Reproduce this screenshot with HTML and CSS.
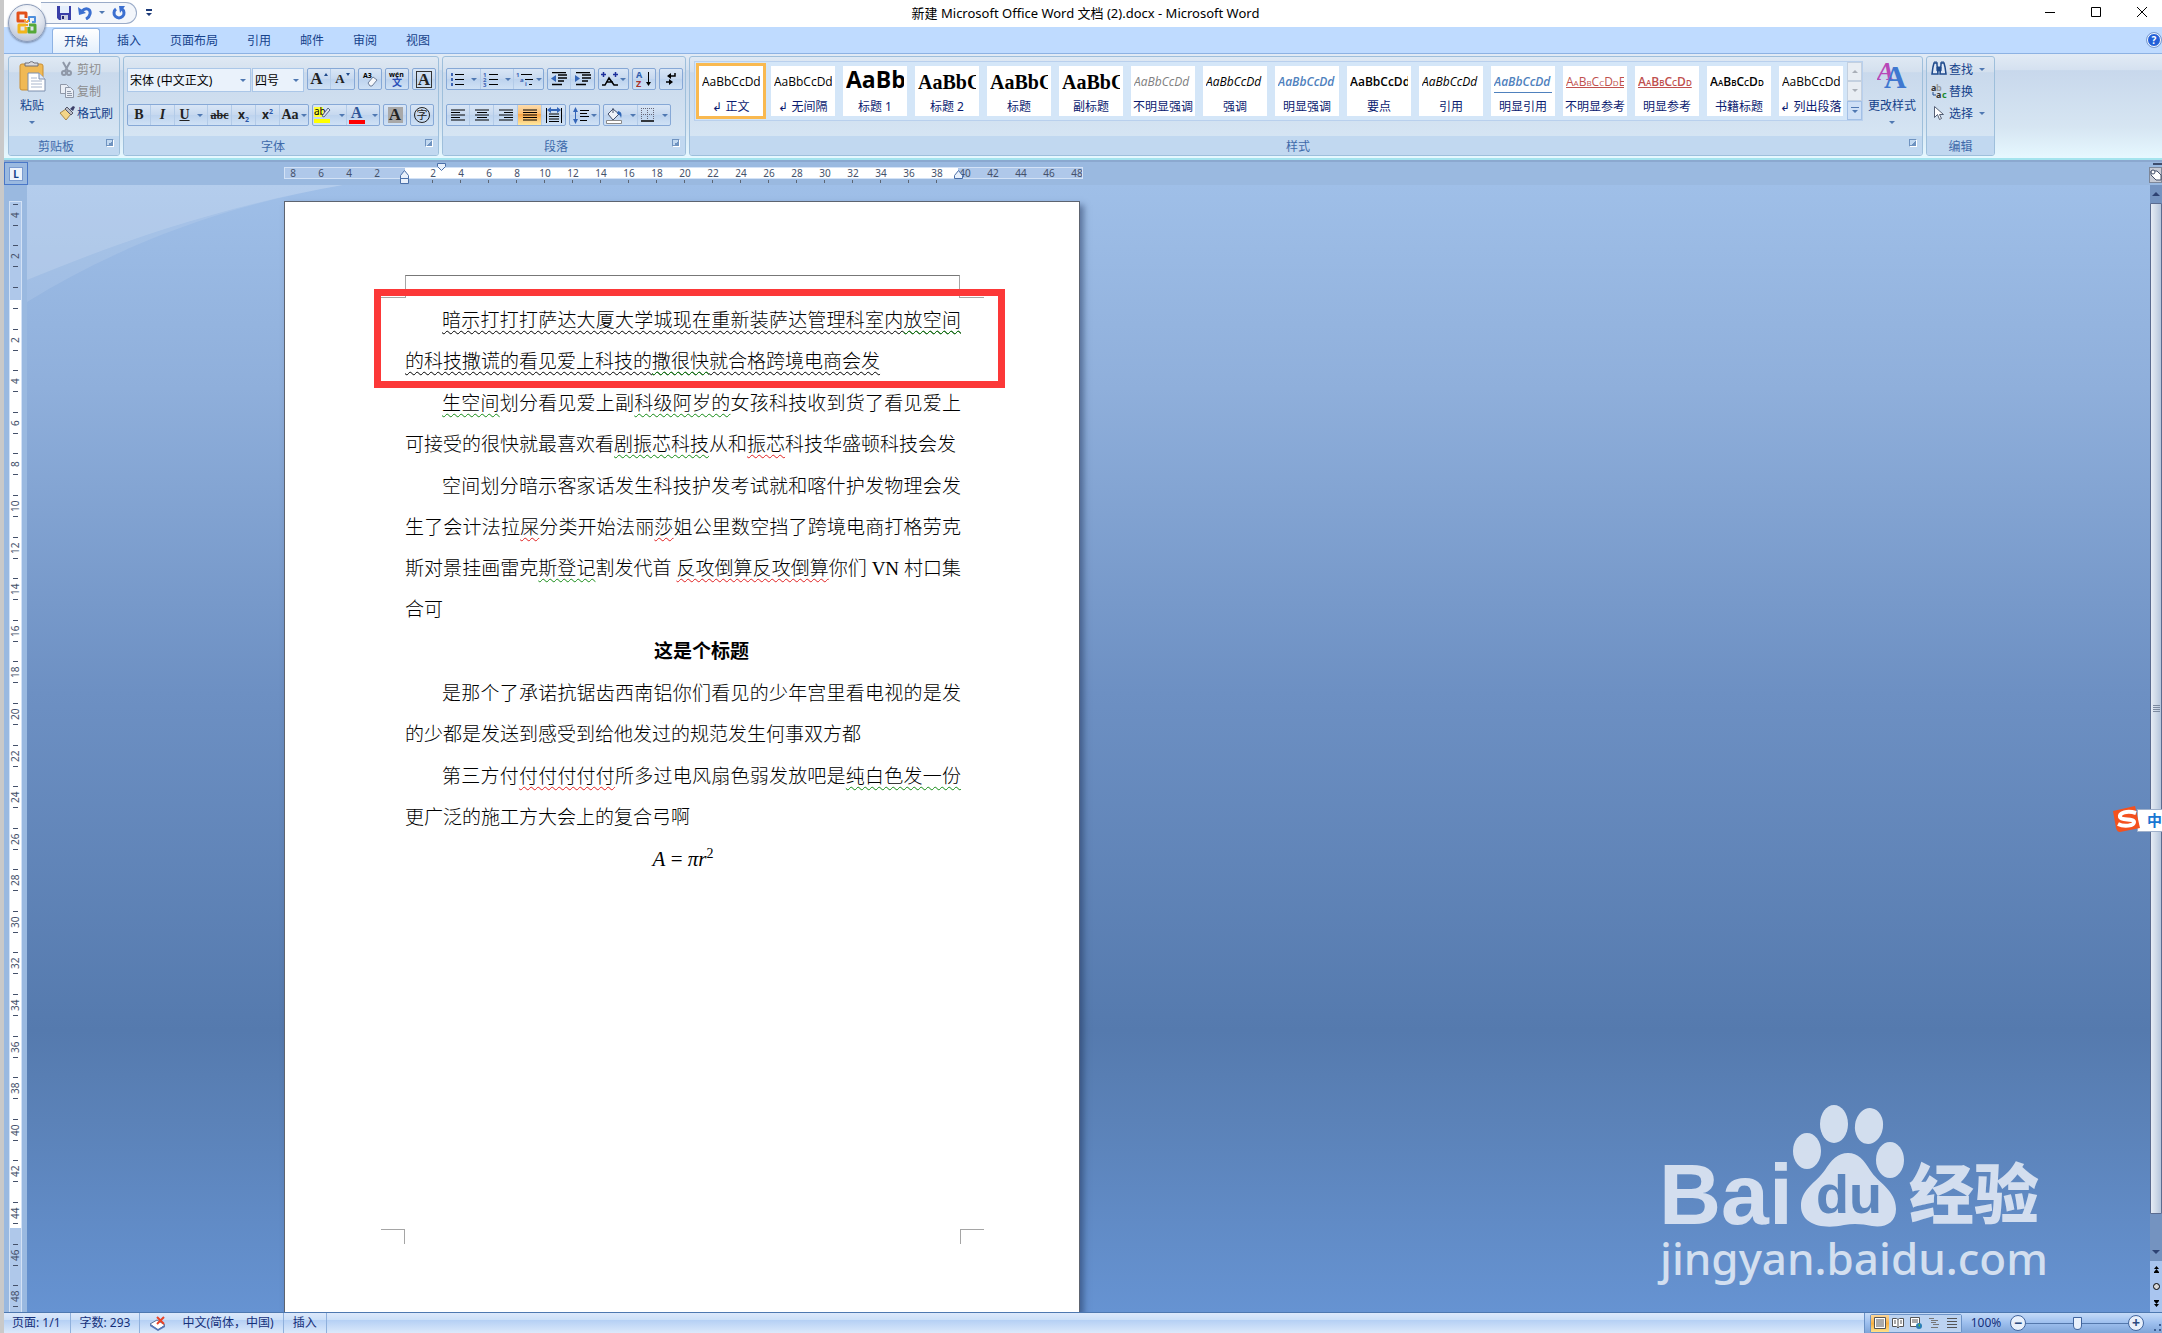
FILE: index.html
```html
<!DOCTYPE html>
<html lang="zh-CN">

<head>
  <meta charset="UTF-8">
  <meta name="viewport" content="width=device-width, initial-scale=1.0">
  <title>新建 Microsoft Office Word 文档 (2).docx - Microsoft Word</title>
  <link rel="stylesheet" href="styles.css">
</head>

<body>
  <div class="app">
    <!-- Title bar -->
    <header class="titlebar">
      <div class="quick-access">
        <button class="qa-btn" aria-label="保存">
          <svg width="14" height="14" viewBox="0 0 14 14"><path d="M0 0h14v14H2l-2-2z" fill="#3a3fa8"/><path d="M3 0h9v7H3z" fill="#e4eefc"/><path d="M4 9h7v5H4z" fill="#c8cce0"/><path d="M5 10h2v3H5z" fill="#23266e"/></svg>
        </button>
        <button class="qa-btn" aria-label="撤消">
          <svg width="14" height="14" viewBox="0 0 14 14"><path d="M4 5c4-4 9-2 8 3-.4 2-2 4-4 5" fill="none" stroke="#3b6fd0" stroke-width="3"/><path d="M0 1l1 8 7-2z" fill="#3b6fd0"/></svg>
        </button>
        <span class="arrow"></span>
        <button class="qa-btn" aria-label="恢复">
          <svg width="14" height="14" viewBox="0 0 14 14"><path d="M4 3a5 5 0 1 0 6 0" fill="none" stroke="#3b6fd0" stroke-width="3"/><path d="M7 0h6L8 7z" fill="#3b6fd0"/></svg>
        </button>
      </div>
      <button class="qa-more" aria-label="自定义快速访问工具栏">
        <svg width="6" height="8" viewBox="0 0 6 8"><path d="M0 0h6v2H0zM0 4h6L3 7z" fill="#1c3a78"/></svg>
      </button>
      <h1 class="title">新建 Microsoft Office Word 文档 (2).docx - Microsoft Word</h1>
      <div class="window-controls">
        <button aria-label="最小化"><svg width="11" height="11" viewBox="0 0 11 11"><path d="M0 5.500h10" stroke="#000"/></svg></button>
        <button aria-label="最大化"><svg width="11" height="11" viewBox="0 0 11 11"><path d="M.5.5h9v9h-9z" fill="none" stroke="#000"/></svg></button>
        <button aria-label="关闭"><svg width="11" height="11" viewBox="0 0 11 11"><path d="M0 0l10 10M10 0L0 10" stroke="#000"/></svg></button>
      </div>
    </header>

    <button class="office-button" aria-label="Office 按钮">
      <svg width="24" height="24" viewBox="0 0 24 24" fill="none" stroke-width="3" stroke-linejoin="round">
        <path d="M11 10H3V2h8v5" stroke="#e2501a"/>
        <path d="M14 11V6h6v5h-3" stroke="#4f8fdc" stroke-width="2"/>
        <path d="M11 14H4v7h7v-5" stroke="#f2b51c"/>
        <path d="M14 14h6v7h-6v-5" stroke="#55a838" stroke-width="3"/>
        <path d="M9 10h6M12 10v6" stroke="#f4a02c" stroke-width="2" stroke-dasharray="2 1"/>
      </svg>
    </button>

    <!-- Ribbon tabs -->
    <nav class="tabs">
      <a class="tab tab-active" href="#">开始</a>
      <a class="tab" href="#">插入</a>
      <a class="tab" href="#">页面布局</a>
      <a class="tab" href="#">引用</a>
      <a class="tab" href="#">邮件</a>
      <a class="tab" href="#">审阅</a>
      <a class="tab" href="#">视图</a>
      <button class="help" aria-label="帮助">?</button>
    </nav>

    <!-- Ribbon -->
    <section class="ribbon">
      <div class="group group-clipboard">
        <div class="group-body">
          <button class="big-btn">
            <svg width="27" height="31" viewBox="0 0 27 31"><rect x="1" y="3" width="23" height="26" rx="2" fill="#f0b955" stroke="#c98f35"/><path d="M6 5h13V2h-4a3 3 0 0 0-5 0H6z" fill="#d8d8dc" stroke="#6f6f78"/><path d="M9 12h11l6 6v12H9z" fill="#fff" stroke="#7d8fae"/><path d="M20 12v6h6" fill="#dfe8f6" stroke="#7d8fae"/><path d="M12 17h6M12 20h11M12 23h11M12 26h11" stroke="#a9b6cc"/></svg>
            <span>粘贴</span>
            <span class="arrow"></span>
          </button>
          <div class="small-list">
            <button class="small-btn" disabled>
              <svg width="16" height="16" viewBox="0 0 16 16" fill="none" stroke="#8f98a8"><path d="M4 1l5 9M11 1L6 10" stroke-width="2"/><circle cx="5" cy="12" r="2" stroke-width="2"/><circle cx="10" cy="12" r="2" stroke-width="2"/></svg>
              <span>剪切</span>
            </button>
            <button class="small-btn" disabled>
              <svg width="16" height="16" viewBox="0 0 16 16" fill="#e9eef6" stroke="#8f98a8"><path d="M1.500 1.500h6l2 2v7h-8z"/><path d="M6.500 4.500h5l3 3v7h-8z"/><path d="M8 8.500h4M8 10.500h5M8 12.500h5"/></svg>
              <span>复制</span>
            </button>
            <button class="small-btn">
              <svg width="16" height="16" viewBox="0 0 16 16"><path d="M1 8l6-4 5 5-5 6z" fill="#f3d588" stroke="#a8874a"/><path d="M6 4l2-2 6 6-2 2z" fill="#b9bcc6" stroke="#55586a"/><path d="M11 4l3-3 2 1-2 4z" fill="#3c3f68"/></svg>
              <span>格式刷</span>
            </button>
          </div>
        </div>
        <div class="group-label"><span>剪贴板</span><i class="launcher"></i></div>
      </div>

      <div class="group group-font">
        <div class="group-rows">
          <div class="row">
            <div class="combos">
              <select class="combo combo-font" aria-label="字体"><option>宋体 (中文正文)</option></select>
              <select class="combo combo-size" aria-label="字号"><option>四号</option></select>
            </div>
            <div class="btn-set">
              <button class="tool" aria-label="增大字体"><span class="serif-17">A</span><i class="mark-up"></i></button>
              <button class="tool" aria-label="缩小字体"><span class="serif-13">A</span><i class="mark-down"></i></button>
            </div>
            <div class="btn-set">
              <button class="tool" aria-label="清除格式"><svg width="18" height="18" viewBox="0 0 18 18"><text x="2" y="8" class="tiny-text">A3</text><path d="M7 13l5-6 4 3-5 6H9z" fill="#f6f8fb" stroke="#6f7f9a"/></svg></button>
            </div>
            <div class="btn-set">
              <button class="tool" aria-label="拼音指南"><svg width="20" height="20" viewBox="0 0 20 20"><text x="2" y="8" class="tiny-text">wén</text><text x="5" y="17" class="han-text">文</text></svg></button>
            </div>
            <div class="btn-set">
              <button class="tool" aria-label="字符边框"><span class="serif-17 boxed">A</span></button>
            </div>
          </div>
          <div class="row">
            <div class="btn-set">
              <button class="tool"><b class="serif-14">B</b></button>
              <button class="tool"><b class="serif-14 italic">I</b></button>
              <button class="tool tool-wide"><b class="serif-14 under">U</b><span class="arrow"></span></button>
              <button class="tool"><b class="serif-12 strike">abc</b></button>
              <button class="tool"><b class="sans-12">x<sub>2</sub></b></button>
              <button class="tool"><b class="sans-12">x<sup>2</sup></b></button>
              <button class="tool tool-mid"><b class="serif-14">Aa</b><span class="arrow"></span></button>
            </div>
            <div class="btn-set">
              <button class="tool tool-wide" aria-label="突出显示"><svg width="18" height="18" viewBox="0 0 18 18"><path d="M0 1h9v10H0z" fill="#ff3"/><text x="0" y="9" class="ab-text">ab</text><path d="M8 10l6-8 2 2-6 7z" fill="#dfe4ee" stroke="#56658a"/><path d="M0 13h16v4H0z" fill="#ff0"/></svg><span class="arrow"></span></button>
              <button class="tool tool-wide" aria-label="字体颜色"><span class="font-color">A</span><span class="arrow"></span></button>
            </div>
            <div class="btn-set"><button class="tool"><span class="serif-17 shaded">A</span></button></div>
            <div class="btn-set"><button class="tool"><span class="circled">字</span></button></div>
          </div>
        </div>
        <div class="group-label"><span>字体</span><i class="launcher"></i></div>
      </div>

      <div class="group group-paragraph">
        <div class="group-rows">
          <div class="row">
            <div class="btn-set">
              <button class="tool tool-wide" aria-label="项目符号"><svg width="14" height="14" viewBox="0 0 14 14"><path d="M5 2.500h9M5 7.500h9M5 12.500h9" stroke="#000"/><path d="M1 2.500h2M1 7.500h2M1 12.500h2" stroke="#3c63b4" stroke-width="3"/></svg><span class="arrow"></span></button>
              <button class="tool tool-wide" aria-label="编号"><svg width="15" height="16" viewBox="0 0 15 16"><path d="M6 3.500h9M6 8.500h9M6 13.500h9" stroke="#000"/><text x="0" y="6" class="num-text">1</text><text x="0" y="11" class="num-text">2</text><text x="0" y="16" class="num-text">3</text></svg><span class="arrow"></span></button>
              <button class="tool tool-list" aria-label="多级列表"><svg width="17" height="16" viewBox="0 0 17 16"><path d="M5 3.500h11M9 8.500h8M13 13.500h3" stroke="#000"/><text x="0" y="6" class="num-text">1</text><text x="4" y="11" class="num-text">a</text><text x="9" y="15" class="num-text">i</text></svg><span class="arrow"></span></button>
            </div>
            <div class="btn-set">
              <button class="tool" aria-label="减少缩进量"><svg width="16" height="14" viewBox="0 0 16 14"><path d="M1 .5h14M7 3h9M7 6h9M7 9h6M1 12.500h10" stroke="#000" stroke-width="1.500"/><path d="M5 3v7L0 6.500z" fill="#3566b8"/></svg></button>
              <button class="tool" aria-label="增加缩进量"><svg width="16" height="14" viewBox="0 0 16 14"><path d="M1 .5h14M7 3h9M7 6h9M7 9h6M1 12.500h10" stroke="#000" stroke-width="1.500"/><path d="M0 3v7l5-3.500z" fill="#3566b8"/></svg></button>
            </div>
            <div class="btn-set">
              <button class="tool tool-mid" aria-label="中文版式"><svg width="17" height="14" viewBox="0 0 17 14"><path d="M1 13h3l4-7 5 7h4M5 10h7" fill="none" stroke="#000" stroke-width="1.500"/><path d="M0 2.500h5M2.500 0v5M12 2.500h5M14.500 0v5" stroke="#1c2f9c" stroke-width="1.500"/></svg><span class="arrow"></span></button>
            </div>
            <div class="btn-set">
              <button class="tool" aria-label="排序"><svg width="16" height="18" viewBox="0 0 16 18"><text x="0" y="8" class="sort-a">A</text><text x="0" y="17" class="sort-z">Z</text><path d="M12.500 2v11" stroke="#000"/><path d="M10 12h5l-2.500 4z"/></svg></button>
            </div>
            <div class="btn-set">
              <button class="tool" aria-label="显示编辑标记"><svg width="12" height="14" viewBox="0 0 12 14"><path d="M10 1v3H5M1 10h5" fill="none" stroke="#000" stroke-width="1.500"/><path d="M6 1v6L2 4zM4 7v6l4-3z"/></svg></button>
            </div>
          </div>
          <div class="row">
            <div class="btn-set">
              <button class="tool" aria-label="左对齐"><svg width="14" height="13" viewBox="0 0 14 13"><path d="M0 1h14M0 3.500h9M0 6h14M0 8.500h9M0 11h14" stroke="#000" stroke-width="1.200"/></svg></button>
              <button class="tool" aria-label="居中"><svg width="14" height="13" viewBox="0 0 14 13"><path d="M0 1h14M2 3.500h10M0 6h14M2 8.500h10M0 11h14" stroke="#000" stroke-width="1.200"/></svg></button>
              <button class="tool" aria-label="右对齐"><svg width="14" height="13" viewBox="0 0 14 13"><path d="M0 1h14M5 3.500h9M0 6h14M5 8.500h9M0 11h14" stroke="#000" stroke-width="1.200"/></svg></button>
              <button class="tool tool-on" aria-label="两端对齐"><svg width="14" height="13" viewBox="0 0 14 13"><path d="M0 1h14M0 3.500h14M0 6h14M0 8.500h14M0 11h14" stroke="#000" stroke-width="1.200"/></svg></button>
              <button class="tool" aria-label="分散对齐"><svg width="16" height="17" viewBox="0 0 16 17"><path d="M.5 1v15M15.500 1v15M3 7h10M3 9.500h10M3 12h10M3 14.500h10" stroke="#000"/><path d="M4 3h8" stroke="#3566b8" stroke-width="2"/><path d="M5 0v6L1 3zM11 0v6l4-3z" fill="#3566b8"/></svg></button>
            </div>
            <div class="btn-set">
              <button class="tool tool-mid" aria-label="行距"><svg width="16" height="17" viewBox="0 0 16 17"><path d="M7 3.500h9M7 6.500h7M7 9.500h9M7 13.500h7" stroke="#000"/><path d="M2.500 3v11" stroke="#3566b8"/><path d="M0 5h5L2.500 0zM0 12h5l-2.500 5z" fill="#3566b8"/></svg><span class="arrow"></span></button>
            </div>
            <div class="btn-set">
              <button class="tool tool-wide" aria-label="底纹"><svg width="17" height="17" viewBox="0 0 17 17"><path d="M2 7l5-5 6 5-6 6z" fill="#eef2f8" stroke="#44506a"/><path d="M7 6V1" stroke="#44506a"/><path d="M12 4c4 1 4 4 3 7-1-3-2-4-4-4z" fill="#2f66b5"/><path d="M.5 13.500h15v3H.5z" fill="#fff" stroke="#8a8a8a"/></svg><span class="arrow"></span></button>
              <button class="tool tool-wide" aria-label="边框"><svg width="14" height="14" viewBox="0 0 14 14"><path d="M.5 0v12M6.500 0v12M12.500 0v12M0 .5h13M0 6.500h13" stroke="#667" stroke-dasharray="1 1"/><path d="M0 13h13" stroke="#000" stroke-width="1.500"/></svg><span class="arrow"></span></button>
            </div>
          </div>
        </div>
        <div class="group-label"><span>段落</span><i class="launcher"></i></div>
      </div>

      <div class="group group-styles">
        <div class="group-body">
          <div class="gallery">
            <button class="style style-on"><span class="sample">AaBbCcDd</span><span class="name">↲ 正文</span></button>
            <button class="style"><span class="sample">AaBbCcDd</span><span class="name">↲ 无间隔</span></button>
            <button class="style"><span class="sample sample-h1">AaBb</span><span class="name">标题 1</span></button>
            <button class="style"><span class="sample sample-h2">AaBbC</span><span class="name">标题 2</span></button>
            <button class="style"><span class="sample sample-h2">AaBbC</span><span class="name">标题</span></button>
            <button class="style"><span class="sample sample-h2">AaBbC</span><span class="name">副标题</span></button>
            <button class="style"><span class="sample italic grey">AaBbCcDd</span><span class="name">不明显强调</span></button>
            <button class="style"><span class="sample italic">AaBbCcDd</span><span class="name">强调</span></button>
            <button class="style"><span class="sample italic semi blue">AaBbCcDd</span><span class="name">明显强调</span></button>
            <button class="style"><span class="sample semi">AaBbCcDd</span><span class="name">要点</span></button>
            <button class="style"><span class="sample italic">AaBbCcDd</span><span class="name">引用</span></button>
            <button class="style"><span class="sample italic semi blue lined">AaBbCcDd</span><span class="name">明显引用</span></button>
            <button class="style"><span class="sample caps red under">AaBbCcDdE</span><span class="name">不明显参考</span></button>
            <button class="style"><span class="sample caps semi red under">AaBbCcDd</span><span class="name">明显参考</span></button>
            <button class="style"><span class="sample caps semi">AaBbCcDd</span><span class="name">书籍标题</span></button>
            <button class="style"><span class="sample">AaBbCcDd</span><span class="name">↲ 列出段落</span></button>
            <div class="gallery-scroll">
              <button aria-label="上一行"><i class="arrow arrow-up arrow-off"></i></button>
              <button aria-label="下一行"><i class="arrow arrow-off"></i></button>
              <button class="gallery-more" aria-label="其他"><svg width="8" height="7" viewBox="0 0 8 7"><path d="M0 0h8v1H0zM1 3h6L4 6z" fill="#4f78b2"/></svg></button>
            </div>
          </div>
          <button class="big-btn big-btn-wide">
            <svg width="30" height="31" viewBox="0 0 30 31"><text x="0" y="19" class="aa-pink">A</text><text x="7" y="27" class="aa-blue">A</text></svg>
            <span>更改样式</span>
            <span class="arrow"></span>
          </button>
        </div>
        <div class="group-label"><span>样式</span><i class="launcher"></i></div>
      </div>

      <div class="group group-edit">
        <div class="group-body">
          <div class="small-list">
            <button class="small-btn"><svg width="16" height="16" viewBox="0 0 16 16"><path d="M3 2h3v2l1 9H1l1-7zM10 2h3l1 4 1 7H9l1-9z" fill="#dfe8f6" stroke="#1f4a8c" stroke-width="1.500"/><path d="M6 6h4v4H6zM3 1h3M10 1h3" fill="#1f4a8c" stroke="#1f4a8c"/></svg><span>查找</span><i class="arrow"></i></button>
            <button class="small-btn"><svg width="16" height="16" viewBox="0 0 16 16"><text x="0" y="8" class="rep-text">a</text><text x="5" y="8" class="rep-text rep-grey">b</text><text x="5" y="15" class="rep-text">a</text><text x="11" y="15" class="rep-text rep-green">c</text><path d="M2 9v3h3" fill="none" stroke="#1f4a8c"/></svg><span>替换</span></button>
            <button class="small-btn"><svg width="16" height="16" viewBox="0 0 16 16"><path d="M3.500 1.500v11l3-3 2 5 2-1-2-4h4z" fill="#fff" stroke="#555f74"/></svg><span>选择</span><i class="arrow"></i></button>
          </div>
        </div>
        <div class="group-label"><span>编辑</span></div>
      </div>
    </section>

    <!-- Horizontal ruler -->
    <div class="hruler">
      <button class="tab-select" aria-label="制表符"><span>L</span></button>
      <div class="hruler-main">
        <div class="hruler-track">
          <ol class="hruler-nums">
            <li>8</li><li>6</li><li>4</li><li>2</li><li></li><li>2</li><li>4</li><li>6</li><li>8</li><li>10</li><li>12</li><li>14</li><li>16</li><li>18</li><li>20</li><li>22</li><li>24</li><li>26</li><li>28</li><li>30</li><li>32</li><li>34</li><li>36</li><li>38</li><li>40</li><li>42</li><li>44</li><li>46</li><li>48</li>
          </ol>
        </div>
        <div class="hruler-ticks"></div>
        <svg class="indent indent-first" width="9" height="8" viewBox="0 0 9 8"><path d="M.5.500h8v3l-4 4-4-4z" fill="#e8f0fb" stroke="#4a6fa8"/></svg>
        <svg class="indent indent-left" width="9" height="14" viewBox="0 0 9 14"><path d="M4.500.500l4 5v3h-8v-3zM.5 8.500h8v5h-8z" fill="#e8f0fb" stroke="#4a6fa8"/></svg>
        <svg class="indent indent-right" width="9" height="9" viewBox="0 0 9 9"><path d="M4.500.500l4 5v3h-8v-3z" fill="#e8f0fb" stroke="#4a6fa8"/></svg>
      </div>
      <div class="ruler-toggle">
        <i></i>
        <button aria-label="标尺"><svg width="12" height="12" viewBox="0 0 12 12"><path d="M1 2h6l4 4v5H6L1 6z" fill="#fff" stroke="#44506a"/><circle cx="3" cy="3" r="2" fill="#fff" stroke="#44506a"/></svg></button>
      </div>
    </div>

    <!-- Workspace -->
    <div class="workspace">
      <div class="vruler">
        <div class="vruler-track">
          <ol class="vruler-nums">
            <li><b>4</b></li><li><b>2</b></li><li><b></b></li><li><b>2</b></li><li><b>4</b></li><li><b>6</b></li><li><b>8</b></li><li><b>10</b></li><li><b>12</b></li><li><b>14</b></li><li><b>16</b></li><li><b>18</b></li><li><b>20</b></li><li><b>22</b></li><li><b>24</b></li><li><b>26</b></li><li><b>28</b></li><li><b>30</b></li><li><b>32</b></li><li><b>34</b></li><li><b>36</b></li><li><b>38</b></li><li><b>40</b></li><li><b>42</b></li><li><b>44</b></li><li><b>46</b></li><li><b>48</b></li>
          </ol>
        </div>
      </div>

      <div class="canvas">
        <svg class="swoosh" width="330" height="120" viewBox="0 0 330 120">
          <path d="M0 0h316C190 22 90 58 0 95z" fill="#fff" opacity=".14"/>
          <path d="M0 0h316C190 22 90 62 0 117z" fill="#fff" opacity=".1"/>
        </svg>

        <main class="page">
          <div class="page-head"><i></i><i></i><i></i></div>
          <article class="doc">
            <p class="para"><span class="wave">暗示打打打萨达大厦大学城现在重新装萨达管理科室内<span class="grammar">放空间</span>的科技撒谎的看见爱上科技的<span class="grammar">撒很快</span>就合格跨境电商会发</span></p>
            <p class="para"><span class="grammar">生空间</span>划分看见爱上副<span class="grammar">科级阿岁的</span>女孩科技收到货了看见爱上可接受的很快就最喜欢看<span class="grammar">剧振芯科技</span>从和<span class="spelling">振芯</span>科技华盛顿科技会发</p>
            <p class="para">空间划分暗示客家话发生科技护发考试就和喀什护发物理会发生了会计法拉<span class="spelling">屎</span>分类开始法丽<span class="spelling">莎</span>姐公里数空挡了跨境电商打格劳克斯对景挂画雷克<span class="grammar">斯登记</span>割发代首 <span class="spelling">反攻倒算反攻倒算</span>你们 VN 村口集合可</p>
            <h2 class="para heading">这是个标题</h2>
            <p class="para">是那个了承诺抗锯齿西南铝你们看见的少年宫里看电视的是发的少都是发送到感受到给他发过的规范发生何事双方都</p>
            <p class="para">第三方付<span class="spelling">付付付付付</span>所多过电风扇色弱发放吧是<span class="grammar">纯白色发一份</span>更广泛的施工方大会上的复合弓啊</p>
            <p class="para formula"><i>A</i> = <i>πr</i><sup>2</sup></p>
          </article>
          <div class="page-foot"><i></i><i></i><i></i></div>
          <div class="highlight"></div>
        </main>

        <svg class="watermark" width="400" height="192" viewBox="0 0 400 192">
          <g fill="#dde6f3" opacity=".92">
            <text x="4" y="126" class="wm-bai">Bai</text>
            <ellipse cx="152" cy="53" rx="14" ry="18"/>
            <ellipse cx="179" cy="26" rx="14" ry="19"/>
            <ellipse cx="214" cy="28" rx="14" ry="18" transform="rotate(8 214 28)"/>
            <ellipse cx="235" cy="62" rx="14" ry="18"/>
            <path d="M193 55c10 0 16 7 22 17 8 13 26 20 26 39 0 14-11 19-24 17-9-2-18-3-28-1-22 5-43-1-43-19 0-17 15-23 24-36 6-10 13-17 23-17z"/>
            <text x="254" y="120" class="wm-han">经验</text>
            <text x="5" y="177" class="wm-url">jingyan.baidu.com</text>
          </g>
          <text x="161" y="115" class="wm-du">du</text>
        </svg>
      </div>

      <div class="vscroll">
        <button class="vs-btn" aria-label="向上滚动"><i class="arrow arrow-up"></i></button>
        <div class="vs-track"><div class="vs-thumb"><i></i><i></i><i></i><i></i></div></div>
        <button class="vs-btn" aria-label="向下滚动"><i class="arrow"></i></button>
        <div class="vs-browse">
          <button aria-label="前一页"><svg width="7" height="7" viewBox="0 0 7 7"><path d="M1 3h5L3.500 0zM1 6h5L3.500 3zM1 6h5v1H1z"/></svg></button>
          <button aria-label="选择浏览对象"><svg width="7" height="7" viewBox="0 0 7 7"><circle cx="3.500" cy="3.500" r="3" fill="#d8d8d8" stroke="#000"/></svg></button>
          <button aria-label="下一页"><svg width="7" height="7" viewBox="0 0 7 7"><path d="M1 1h5L3.500 4zM1 4h5L3.500 7zM1 0h5v1H1z"/></svg></button>
        </div>
      </div>

      <div class="ime">
        <svg width="30" height="30" viewBox="0 0 30 30"><path d="M1 6l22-5 5 22-20 4q-3 0-4-4z" fill="#f4511e"/><path d="M24 8C15 5 7 8 8 12s14 1 14 5-10 5-16 2" fill="none" stroke="#fff" stroke-width="4"/></svg>
        <span>中</span>
      </div>
    </div>

    <!-- Status bar -->
    <footer class="status">
      <span class="status-item">页面: 1/1</span>
      <span class="status-item">字数: 293</span>
      <span class="status-item status-lang">
        <svg width="17" height="15" viewBox="0 0 17 15"><path d="M1 8l7-4 8 5-7 5z" fill="#fff" stroke="#5a6f96"/><path d="M1 8v2l8 5v-2zM16 9v2l-7 4v-2z" fill="#5878b8"/><path d="M8 1l7 7M15 1L8 8" stroke="#e84328" stroke-width="2"/></svg>
        中文(简体，中国)
      </span>
      <span class="status-item">插入</span>
      <div class="status-right">
        <div class="views">
          <button class="view view-on" aria-label="页面视图"><svg width="12" height="12" viewBox="0 0 12 12"><path d="M.5.500h11v11H.5z" fill="#fff" stroke="#555"/><path d="M2 3h8M2 5h8M2 7h8M2 9h8" stroke="#555"/></svg></button>
          <button class="view" aria-label="阅读版式"><svg width="12" height="12" viewBox="0 0 12 12"><path d="M.5 1.500h4l1.500 1 1.500-1h4v8h-4l-1.500 1.500-1.500-1.500h-4z" fill="#fff" stroke="#555"/><path d="M2 4h2M2 6h2M8 4h2M8 6h2M6 3v8" stroke="#555"/></svg></button>
          <button class="view" aria-label="Web 版式"><svg width="12" height="12" viewBox="0 0 12 12"><path d="M.5.500h9v9h-9z" fill="#fff" stroke="#555"/><path d="M2 3h6M2 5h6" stroke="#555"/><circle cx="9" cy="9" r="3" fill="#2a7fb5"/><path d="M8 8l2-1v3z" fill="#4fb04a"/></svg></button>
          <button class="view" aria-label="大纲视图"><svg width="12" height="12" viewBox="0 0 12 12"><path d="M1 1.500h5M3 3.500h7M3 5.500h5M5 7.500h6M3 10.500h7" stroke="#777"/></svg></button>
          <button class="view" aria-label="普通视图"><svg width="12" height="12" viewBox="0 0 12 12"><path d="M1 1.500h10M1 4.500h10M1 7.500h10M1 10.500h10" stroke="#555"/></svg></button>
        </div>
        <button class="zoom-value">100%</button>
        <button class="zoom-btn" aria-label="缩小">−</button>
        <input class="zoom-range" type="range" min="0" max="100" value="50" aria-label="显示比例">
        <button class="zoom-btn" aria-label="放大">+</button>
        <svg class="grip" width="7" height="7" viewBox="0 0 7 7"><path d="M5 0h2v2H5zM5 5h2v2H5zM0 5h2v2H0z" fill="#3f5f94"/></svg>
      </div>
    </footer>
  </div>
</body>

</html>
```
FILE: styles.css
```css
* {
  box-sizing: border-box;
}

body {
  margin: 0;
  font-family: "Noto Sans", "Noto Sans CJK SC", sans-serif;
  font-size: 12px;
  color: #15428b;
  background: #c9c9c9;
}

button {
  padding: 0;
  border: 0;
  background: none;
  font: inherit;
  color: inherit;
}

ol {
  margin: 0;
  padding: 0;
  list-style: none;
}

svg {
  display: block;
  flex-shrink: 0;
}

.app {
  position: relative;
  display: flex;
  flex-direction: column;
  height: 100vh;
  margin-left: 4px;
  overflow: hidden;
}

/* Small drop-down triangle */
.arrow {
  flex-shrink: 0;
  width: 0;
  height: 0;
  border: 3px solid transparent;
  border-top-color: #4f78b2;
  border-bottom-width: 0;
}

.arrow-up {
  border-top-width: 0;
  border-bottom: 3px solid #4f78b2;
}

.arrow-off {
  border-top-color: #a9afb8;
  border-bottom-color: #a9afb8;
}

/* Title bar */
.titlebar {
  display: grid;
  grid-template-columns: auto 1fr auto 1fr;
  align-items: center;
  height: 27px;
  flex-shrink: 0;
  padding: 0 0 2px 37px;
  background: #fff;
}

.quick-access {
  display: flex;
  align-items: center;
  gap: 7px;
  width: 96px;
  height: 22px;
  padding-left: 16px;
  border: 1px solid #9aabc8;
  border-left: 0;
  border-radius: 0 11px 11px 0;
  background: #f3f6fb;
}

.qa-more {
  width: 24px;
  display: flex;
  justify-content: center;
}

.title {
  margin: 0;
  font-size: 13px;
  font-weight: 400;
  line-height: 24px;
  color: #000;
  padding-right: 128px;
}

.window-controls {
  display: flex;
  justify-content: flex-end;
  gap: 35px;
  padding-right: 14px;
}

.office-button {
  position: absolute;
  top: 4px;
  left: 4px;
  z-index: 2;
  display: flex;
  align-items: center;
  justify-content: center;
  width: 38px;
  height: 38px;
  border: 1px solid #8b9bb8;
  border-radius: 50%;
  background: radial-gradient(circle at 50% 25%, #fff, #dfe4ee 50%, #aab6cc);
  box-shadow: 0 1px 2px #7588a8;
}

/* Tabs */
.tabs {
  display: flex;
  align-items: flex-end;
  gap: 5px;
  height: 27px;
  flex-shrink: 0;
  padding: 0 1px 0 48px;
  border-bottom: 1px solid #8db2e3;
  background: #bfdbff;
}

.tab {
  height: 25px;
  padding: 0 12px;
  border-radius: 3px 3px 0 0;
  line-height: 25px;
  color: #15428b;
  text-decoration: none;
}

.tab-active {
  border: 1px solid #8db2e3;
  border-bottom: 0;
  padding: 0 11px;
  background: linear-gradient(#fff, #e3effc);
}

.help {
  width: 14px;
  height: 14px;
  margin: 0 0 6px auto;
  border: 1px solid #fff;
  border-radius: 50%;
  outline: 1px solid #7a9bd0;
  background: #2360d8;
  color: #fff;
  font-size: 10px;
  font-weight: 700;
  line-height: 12px;
}

/* Ribbon */
.ribbon {
  display: flex;
  gap: 3px;
  height: 106px;
  flex-shrink: 0;
  padding: 2px 4px;
  border-bottom: 2px solid #a4e4ee;
  background: linear-gradient(#e2ebf5, #d5e1f0 15%, #c8d8ec 16%, #d6e5f2 70%, #e6f8ff);
}

.group {
  display: flex;
  flex-direction: column;
  border: 1px solid #9ebfdb;
  border-radius: 3px;
  background: linear-gradient(#dfe9f4, #d4e0ee 15%, #c9d9ec 16%, #d9e8f5);
  overflow: hidden;
}

.group-clipboard {
  width: 112px;
}

.group-font {
  width: 316px;
}

.group-paragraph {
  width: 244px;
}

.group-styles {
  width: 1234px;
}

.group-edit {
  width: 69px;
}

.group-body {
  display: flex;
  flex: 1;
}

.group-label {
  display: flex;
  align-items: center;
  height: 19px;
  background: #c1d8f0;
  color: #3e6aaa;
}

.group-label span {
  flex: 1;
  text-align: center;
}

.launcher {
  width: 8px;
  height: 8px;
  margin: 0 5px 5px 3px;
  border: 1px solid #6f93c0;
  border-right-color: #fff;
  border-bottom-color: #fff;
  background: linear-gradient(135deg, transparent 50%, #6f93c0 50%);
}

.big-btn {
  display: flex;
  flex-direction: column;
  align-items: center;
  width: 46px;
  padding-top: 4px;
  line-height: 18px;
}

.big-btn svg {
  margin-bottom: 5px;
}

.big-btn .arrow {
  margin-top: 6px;
}

.big-btn-wide {
  width: 58px;
}

.small-list {
  display: flex;
  flex-direction: column;
  padding: 1px 0 0 4px;
}

.small-btn {
  display: flex;
  align-items: center;
  gap: 2px;
  height: 22px;
}

.small-btn .arrow {
  margin-left: 4px;
}

.small-btn:disabled {
  color: #8d8d8d;
}

.group-rows {
  display: flex;
  flex: 1;
  flex-direction: column;
  gap: 14px;
  padding: 11px 3px 0;
}

.row {
  display: flex;
  gap: 3px;
  height: 22px;
}

.combos {
  display: flex;
  gap: 1px;
  height: 24px;
}

.combo {
  padding: 0 2px;
  border: 1px solid #abc7e8;
  border-radius: 0;
  appearance: none;
  background: #eaf2fb url("data:image/svg+xml,%3Csvg xmlns='http://www.w3.org/2000/svg' width='6' height='3'%3E%3Cpath d='M0 0h6L3 3z' fill='%234f78b2'/%3E%3C/svg%3E") no-repeat right 4px center;
  font: inherit;
  color: #000;
}

.combo-font {
  width: 124px;
}

.combo-size {
  width: 52px;
}

.btn-set {
  display: flex;
  border: 1px solid #86a8d6;
  border-radius: 2px;
  background: linear-gradient(#d9e6f6, #c6d8ef 50%, #bdd3ee 51%, #cfe1f5);
}

.tool {
  display: flex;
  align-items: center;
  justify-content: center;
  gap: 4px;
  width: 22px;
  color: #222;
}

.tool + .tool {
  border-left: 1px solid #b3cbe8;
  width: 24px;
}

.tool-wide,
.tool + .tool-wide {
  width: 33px;
  gap: 7px;
}

.tool + .tool-list {
  width: 30px;
  gap: 3px;
}

.tool-mid,
.tool + .tool-mid {
  width: 29px;
  gap: 2px;
}

.tool-on {
  background: linear-gradient(#fbdcae, #fdbd6c 45%, #fca646 46%, #fee9a0);
}

.serif-17,
.serif-14,
.serif-13,
.serif-12,
.font-color {
  font-family: "Liberation Serif", serif;
  font-weight: 700;
  line-height: 16px;
}

.serif-17 {
  font-size: 17px;
}

.serif-14 {
  font-size: 14px;
}

.serif-13 {
  font-size: 13px;
}

.serif-12 {
  font-size: 12px;
}

.sans-12 {
  font-size: 12px;
  line-height: 16px;
}

.sans-12 sub,
.sans-12 sup {
  font-size: 7px;
  line-height: 7px;
  color: #2b57a8;
}

.mark-up,
.mark-down {
  align-self: flex-start;
  margin: 4px 0 0 -3px;
  border: 2px solid transparent;
  border-top: 0;
  border-bottom: 3px solid #1f4a8c;
}

.mark-down {
  border-top: 3px solid #1f4a8c;
  border-bottom: 0;
}

.italic {
  font-style: italic;
}

.under {
  text-decoration: underline;
}

.strike {
  text-decoration: line-through;
}

.boxed {
  width: 16px;
  border: 1px solid #333;
  line-height: 15px;
}

.shaded {
  width: 15px;
  background: #a8a8a8;
}

.circled {
  width: 16px;
  height: 16px;
  border: 1px solid #222;
  border-radius: 50%;
  font-size: 11px;
  line-height: 14px;
}

.font-color {
  width: 16px;
  border-bottom: 4px solid #f00;
  font-size: 16px;
  line-height: 14px;
  color: #2f5597;
}

.tiny-text {
  font-size: 7px;
  font-weight: 700;
}

.han-text {
  font-size: 10px;
  font-weight: 700;
  fill: #2a50b8;
}

.ab-text {
  font-size: 10px;
}

.num-text {
  font-size: 6px;
  font-weight: 700;
  fill: #3c63b4;
}

.sort-a,
.sort-z {
  font-size: 9px;
  font-weight: 700;
  fill: #2f5fae;
}

.sort-z {
  fill: #a8322c;
}

.aa-pink,
.aa-blue {
  font-family: "Liberation Serif", serif;
  font-size: 26px;
  font-weight: 700;
  font-style: italic;
  fill: #b848b8;
}

.aa-blue {
  font-size: 31px;
  font-style: normal;
  fill: #3f78d0;
}

.rep-text {
  font-size: 9px;
  font-weight: 700;
  fill: #333;
}

.rep-grey {
  fill: #999;
}

.rep-green {
  fill: #1b8a2f;
}

/* Style gallery */
.gallery {
  display: flex;
  height: 60px;
  margin: 4px 0 0 4px;
  border: 1px solid #b9d0ed;
  background: #d4e6f8;
}

.style {
  display: flex;
  flex-direction: column;
  width: 64px;
  height: 50px;
  margin: 4px;
  padding: 0 3px;
  background: #fff;
  overflow: hidden;
}

.style-on {
  outline: 3px solid #f9b950;
}

.sample {
  width: 58px;
  height: 27px;
  font-family: "Open Sans", sans-serif;
  font-size: 12px;
  line-height: 32px;
  text-align: left;
  white-space: nowrap;
  color: #000;
  overflow: hidden;
}

.sample-h1 {
  font-size: 23px;
  font-weight: 700;
  line-height: 27px;
}

.sample-h2 {
  font-family: "Liberation Serif", serif;
  font-size: 20px;
  font-weight: 700;
}

.semi {
  font-weight: 600;
}

.caps {
  font-variant: small-caps;
}

.grey {
  color: #808080;
}

.blue {
  color: #4f81bd;
}

.red {
  color: #c0504d;
}

.lined {
  border-bottom: 1px solid #4f81bd;
}

.name {
  width: 64px;
  margin: 6px 0 0 -3px;
  line-height: 16px;
  color: #0b1b70;
  white-space: nowrap;
}

.gallery-scroll {
  display: flex;
  flex-direction: column;
  width: 15px;
}

.gallery-scroll button {
  display: flex;
  flex: 1;
  align-items: center;
  justify-content: center;
  border: 1px solid #c3d0e0;
  background: #e8edf3;
}

.gallery-scroll .gallery-more {
  border-color: #a3c0e6;
  background: #cfe0f6;
}

/* Horizontal ruler */
.hruler {
  display: flex;
  height: 25px;
  flex-shrink: 0;
  background: #9ab9e0;
  border-top: 2px solid #8ba8cf;
}

.tab-select {
  width: 24px;
  height: 23px;
  border: 1px solid #4a78c8;
}

.tab-select span {
  display: block;
  width: 14px;
  height: 14px;
  margin: 0 auto;
  border: 1px solid #7a9bd0;
  background: #eef4fc;
  font-size: 10px;
  font-weight: 700;
  line-height: 12px;
}

.hruler-main {
  position: relative;
  flex: 1;
  padding: 5px 0 0 256px;
}

.hruler-track {
  width: 799px;
  height: 12px;
  border: 1px solid #d3e2f6;
  background: linear-gradient(90deg, #afc8ea 120px, #fff 120px, #fff 673px, #afc8ea 673px);
  overflow: hidden;
}

.hruler-nums {
  display: flex;
  margin-left: -6px;
}

.hruler-nums li {
  flex: 0 0 28px;
  font-size: 10px;
  line-height: 10px;
  text-align: center;
  color: #45516a;
}

.hruler-ticks {
  width: 505px;
  height: 3px;
  margin: 1px 0 0 148px;
  background: repeating-linear-gradient(90deg, #5c6675 0, #5c6675 1px, transparent 1px, transparent 28px);
}

.indent {
  position: absolute;
}

.indent-first {
  top: 1px;
  left: 409px;
}

.indent-left {
  top: 8px;
  left: 372px;
}

.indent-right {
  top: 8px;
  left: 926px;
}

.ruler-toggle {
  width: 13px;
  padding-top: 1px;
}

.ruler-toggle i {
  display: block;
  height: 2px;
  margin: 0 0 2px 4px;
  background: #3d4c6c;
}

.ruler-toggle button {
  width: 13px;
  height: 16px;
  border: 1px solid #7d8799;
  background: #c6cad4;
}

/* Workspace */
.workspace {
  position: relative;
  display: flex;
  flex: 1;
  min-height: 0;
}

.vruler {
  display: flex;
  width: 23px;
  padding: 16px 5px 0;
  background: #9ab9e0;
}

.vruler-track {
  display: flex;
  flex: 1;
  border: 1px solid #d3e2f6;
  border-bottom: 0;
  background: linear-gradient(#afc8ea 98px, #fff 98px, #fff calc(100% - 84px), #afc8ea calc(100% - 84px));
  overflow: hidden;
}

.vruler-nums {
  display: flex;
  flex: 1;
  flex-direction: column;
  margin: -8px 0 -5px;
}

.vruler-nums li {
  display: flex;
  flex: 1;
  flex-direction: column;
  align-items: center;
  justify-content: center;
}

.vruler-nums li::before,
.vruler-nums li::after {
  content: "";
  width: 5px;
  height: 1px;
  background: #45516a;
}

.vruler-nums b {
  height: 20px;
  writing-mode: vertical-rl;
  transform: rotate(180deg);
  font-size: 10px;
  font-weight: 400;
  line-height: 11px;
  text-align: center;
  color: #45516a;
}

.canvas {
  position: relative;
  display: flex;
  flex: 1;
  padding: 16px 0 0 257px;
  background: linear-gradient(#9fbfe8, #8fafdb 18%, #6d90c3 45%, #557aae 75%, #5b82b8 83%, #6693d2);
  overflow: hidden;
}

.swoosh {
  position: absolute;
  top: 0;
  left: 0;
}

/* Paper */
.page {
  position: relative;
  display: flex;
  flex-direction: column;
  width: 796px;
  padding-top: 73px;
  border: 1px solid #5d6470;
  border-bottom: 0;
  background: #fff;
  box-shadow: 4px 4px 6px rgba(30, 50, 90, .5);
}

.page-head,
.page-foot {
  display: grid;
  grid-template-columns: 24px 1fr 24px;
  padding: 0 95px 0 96px;
}

.page-head {
  height: 23px;
}

.page-head i {
  border-bottom: 1px solid #a5a5a5;
}

.page-head i:nth-child(2) {
  border: 1px solid #a5a5a5;
  border-top-color: #777;
  border-bottom: 0;
}

.page-foot {
  height: 83px;
}

.page-foot i {
  height: 15px;
}

.page-foot i:first-child {
  border-top: 1px solid #a5a5a5;
  border-right: 1px solid #a5a5a5;
}

.page-foot i:last-child {
  border-top: 1px solid #a5a5a5;
  border-left: 1px solid #a5a5a5;
}

.doc {
  flex: 1;
  padding: 2px 118px 0 120px;
  font-family: "Liberation Serif", "Noto Sans CJK SC", serif;
  font-size: 19px;
  font-weight: 300;
  line-height: 41px;
  color: #000;
}

.para {
  margin: 0 0 1px;
  text-indent: 37px;
  text-align: justify;
}

.heading {
  font-size: 19px;
  font-weight: 700;
  text-align: center;
}

.formula {
  font-size: 21px;
  text-align: center;
  text-indent: 0;
}

.formula sup {
  font-size: 14px;
  line-height: 14px;
}

.wave,
.grammar,
.spelling {
  text-decoration: underline wavy #000 1px;
  text-underline-offset: 3px;
}

.grammar {
  text-decoration-color: #138a13;
}

.spelling {
  text-decoration-color: #e02020;
}

.highlight {
  position: absolute;
  top: 87px;
  left: 89px;
  width: 631px;
  height: 99px;
  border: 7px solid #fc3838;
}

.watermark {
  position: absolute;
  right: 95px;
  bottom: 22px;
}

.wm-bai {
  font-family: "Liberation Sans", sans-serif;
  font-size: 86px;
  font-weight: 700;
}

.wm-han {
  font-family: "Noto Sans CJK SC", sans-serif;
  font-size: 65px;
  font-weight: 900;
}

.wm-du {
  font-family: "Liberation Sans", sans-serif;
  font-size: 54px;
  font-weight: 700;
  fill: #5d86bd;
}

.wm-url {
  font-family: "Noto Sans", sans-serif;
  font-size: 44px;
  font-weight: 500;
}

/* Vertical scroll bar */
.vscroll {
  display: flex;
  flex-direction: column;
  width: 12px;
  background: #7493c0;
}

.vs-btn {
  display: flex;
  align-items: center;
  justify-content: center;
  height: 18px;
}

.vs-btn .arrow {
  border-width: 4px;
  border-top-color: #2e4373;
  border-bottom-width: 0;
}

.vs-btn .arrow-up {
  border-top-width: 0;
  border-bottom: 4px solid #2e4373;
}

.vs-track {
  flex: 1;
  padding-bottom: 29px;
}

.vs-thumb {
  display: flex;
  flex-direction: column;
  align-items: center;
  justify-content: center;
  gap: 1px;
  height: 100%;
  border: 1px solid #5b6c90;
  border-radius: 1px;
  background: linear-gradient(90deg, #e6ecf5, #cfdae8 50%, #b5c5dc);
}

.vs-thumb i {
  width: 7px;
  height: 1px;
  background: #7c8aa0;
}

.vs-browse {
  display: flex;
  flex-direction: column;
  height: 51px;
  background: #a9c5ef;
}

.vs-browse button {
  display: flex;
  flex: 1;
  align-items: center;
  justify-content: center;
}

/* Input method badge, floats over the scroll bar */
.ime {
  position: absolute;
  right: 0;
  top: 620px;
  display: flex;
  align-items: center;
}

.ime svg {
  z-index: 1;
  margin-right: -5px;
}

.ime span {
  width: 25px;
  height: 23px;
  border: 1px solid #9fb0ca;
  border-right: 0;
  background: #fff;
  font-size: 15px;
  font-weight: 700;
  line-height: 21px;
  text-align: right;
  color: #1976d2;
}

/* Status bar */
.status {
  display: flex;
  align-items: stretch;
  height: 21px;
  flex-shrink: 0;
  border-top: 1px solid #4d78b0;
  background: linear-gradient(#dce9fb, #cbdff8 35%, #b5d0f4 36%, #dbe9fb);
  color: #15307a;
  line-height: 20px;
}

.status-item {
  display: flex;
  align-items: center;
  padding: 0 9px;
  border-right: 1px solid #8fb0dc;
}

.status-item:first-child {
  padding-left: 8px;
}

.status-lang {
  gap: 16px;
}

.status-right {
  display: flex;
  align-items: center;
  margin-left: auto;
  width: 298px;
  padding-left: 5px;
  border-left: 1px solid #6b92c6;
  background: linear-gradient(#c5dbf8, #9dbfee 50%, #7fa5d8);
}

.views {
  display: flex;
  height: 19px;
  border: 1px solid #6b92c6;
  border-radius: 2px;
}

.view {
  display: flex;
  align-items: center;
  justify-content: center;
  width: 18px;
  background: #bcd3f1;
}

.view-on {
  background: linear-gradient(#fbd79c, #f8b040 50%, #fee08a);
}

.zoom-value {
  width: 48px;
}

.zoom-btn {
  width: 16px;
  height: 16px;
  border: 1px solid #41659e;
  border-radius: 50%;
  background: #e8f0fb;
  font-size: 14px;
  font-weight: 700;
  line-height: 12px;
  color: #2b4a80;
}

.zoom-range {
  width: 102px;
  height: 16px;
  margin: 0;
  appearance: none;
  background: linear-gradient(#5478ac, #5478ac) center / 100% 1px no-repeat;
}

.zoom-range::-webkit-slider-thumb {
  appearance: none;
  width: 9px;
  height: 13px;
  border: 1px solid #41659e;
  border-radius: 1px 1px 5px 5px;
  background: #e8f0fb;
}

.grip {
  align-self: flex-end;
  margin: 0 1px 2px auto;
}
```
